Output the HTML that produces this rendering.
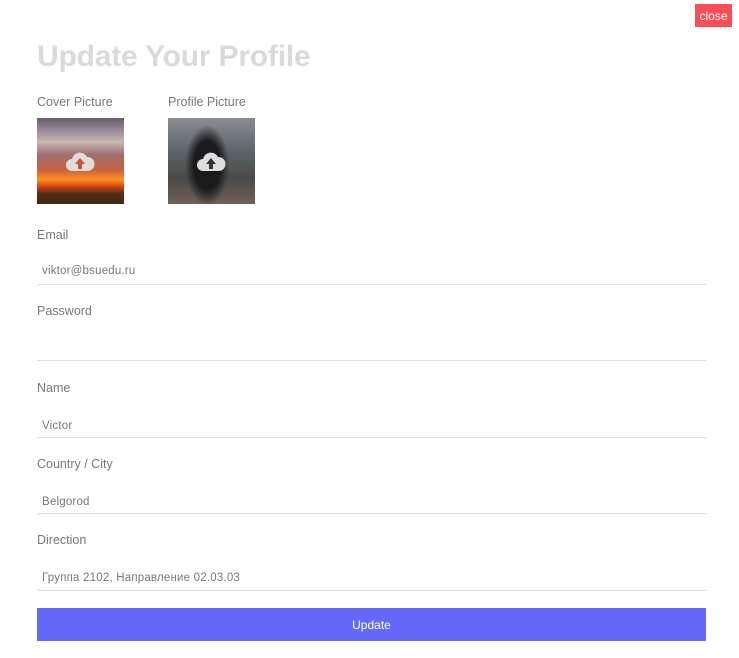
<!DOCTYPE html>
<html><head><meta charset="utf-8"><style>
*{margin:0;padding:0;box-sizing:border-box}
body{width:739px;height:658px;background:#fff;font-family:"Liberation Sans","DejaVu Sans",sans-serif;position:relative;overflow:hidden}
.a{position:absolute}
h1{position:absolute;left:37px;top:40px;font-size:30px;font-weight:bold;color:#dadada;letter-spacing:-0.2px}
.lbl{position:absolute;font-size:12.5px;color:#777}
.val{position:absolute;left:42px;font-size:11.5px;color:#777;letter-spacing:0.2px}
.line{position:absolute;left:37px;width:669px;height:1px;background:#ddd}
.img{position:absolute;top:118px;width:87px;height:86px}
.cl{position:absolute;width:30px;height:20px;left:28px;top:34px}
</style></head><body>
<div class="a" style="left:695px;top:4px;width:37px;height:23px;background:#ff4d55;color:#fff;font-size:12px;line-height:24px;text-align:center">close</div>
<h1>Update Your Profile</h1>
<div class="lbl" style="left:37px;top:95px">Cover Picture</div>
<div class="lbl" style="left:168px;top:95px">Profile Picture</div>
<div class="img" style="left:37px;background:linear-gradient(180deg,#6a5a6a 0%,#9a8c9c 15%,#c8b8b0 28%,#a07078 42%,#c86040 60%,#ff9020 72%,#d04010 80%,#503018 88%,#402810 100%)">
<svg class="cl" viewBox="0 0 30 20"><path d="M7 19a6 6 0 0 1 0-12a8 8 0 0 1 15-2a7 7 0 0 1 1 14z" fill="#ddd"/><path d="M15 6l-5 6h3v5h4v-5h3z" fill="#d05030"/></svg></div>
<div class="img" style="left:168px;background:radial-gradient(ellipse 22px 40px at 45% 55%,#1a1a1c 60%,transparent 100%),linear-gradient(180deg,#8a8c90 0%,#5a6468 40%,#4a4a48 70%,#706058 100%)">
<svg class="cl" viewBox="0 0 30 20"><path d="M7 19a6 6 0 0 1 0-12a8 8 0 0 1 15-2a7 7 0 0 1 1 14z" fill="#ddd"/><path d="M15 6l-5 6h3v5h4v-5h3z" fill="#333"/></svg></div>

<div class="lbl" style="left:37px;top:228px">Email</div>
<div class="val" style="top:265px">viktor@bsuedu.ru</div>
<div class="line" style="top:284px"></div>
<div class="lbl" style="left:37px;top:304px">Password</div>
<div class="line" style="top:360px"></div>
<div class="lbl" style="left:37px;top:381px">Name</div>
<div class="val" style="top:420px">Victor</div>
<div class="line" style="top:437px"></div>
<div class="lbl" style="left:37px;top:457px">Country / City</div>
<div class="val" style="top:496px">Belgorod</div>
<div class="line" style="top:513px"></div>
<div class="lbl" style="left:37px;top:533px">Direction</div>
<div class="val" style="top:572px">Группа 2102, Направление 02.03.03</div>
<div class="line" style="top:590px"></div>
<div class="a" style="left:37px;top:608px;width:669px;height:33px;background:#6469f9;color:#fff;font-size:12px;line-height:34px;text-align:center">Update</div>
</body></html>
